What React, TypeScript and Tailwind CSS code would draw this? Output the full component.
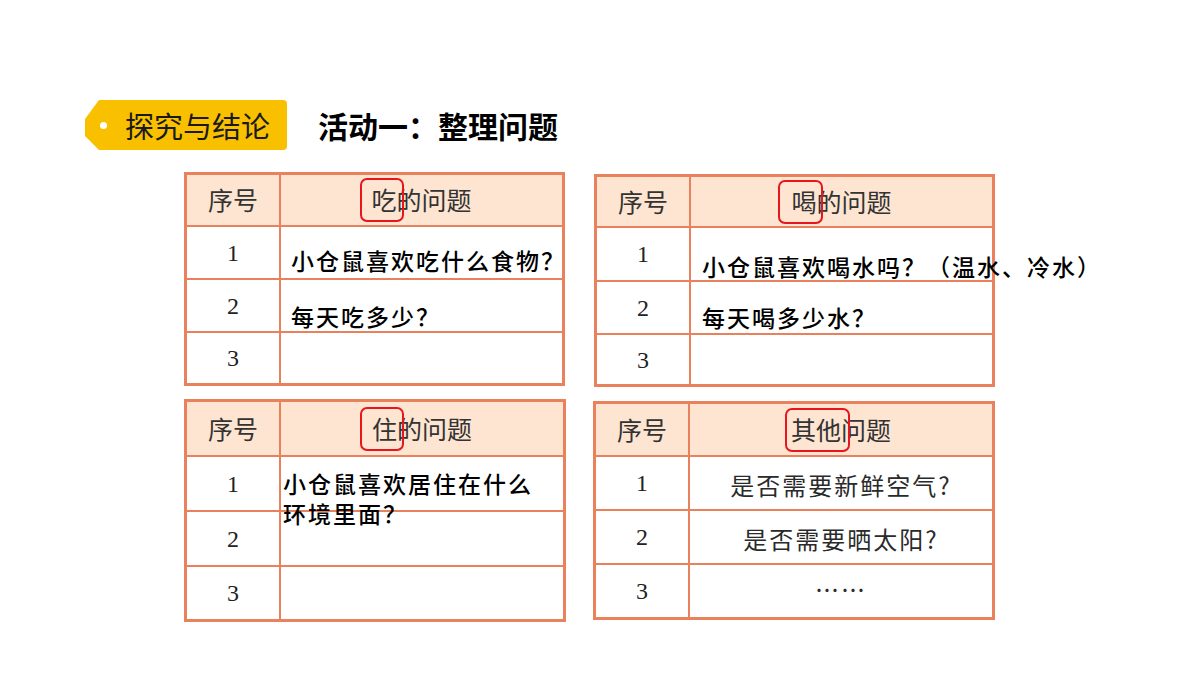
const SANS = 'font-["Noto_Sans_CJK_SC","Noto_Sans",sans-serif]';

type Row = { h: number; text?: React.ReactNode };

const Mark: React.FC<{ chars: string; left: number; width: number }> = ({ chars, left, width }) => (
    <span className="relative inline-block">
        {chars}
        <span
            className="absolute top-1/2 -translate-y-1/2 h-[44px] rounded-[7px] border-2 border-[#e8161c]"
            style={{ left: -left, width }}
        />
    </span>
);

// rows: h is the cell height without the 2px rule above it
const QTable: React.FC<{
    width: number;
    headH: number;
    head: React.ReactNode;
    rows: Row[];
    className?: string;
}> = ({ width, headH, head, rows, className }) => (
    <div className={`border-[3px] border-[#e9825c] bg-white ${className ?? ''}`} style={{ width }}>
        <div className="flex bg-[#fde5d2]" style={{ height: headH }}>
            <div className={`w-[94px] shrink-0 border-r-2 border-[#e9825c] flex items-center justify-center text-[25px] text-[#333] ${SANS}`}>
                序号
            </div>
            <div className={`flex-1 flex items-center justify-center text-[25px] text-[#333] ${SANS}`}>{head}</div>
        </div>
        {rows.map((r, i) => (
            <div key={i} className="flex border-t-2 border-[#e9825c]" style={{ height: r.h + 2 }}>
                <div className='w-[94px] shrink-0 border-r-2 border-[#e9825c] flex items-center justify-center text-[24px] text-[#222] font-["Liberation_Serif",serif]'>
                    {i + 1}
                </div>
                <div className="flex-1 relative">{r.text}</div>
            </div>
        ))}
    </div>
);

const body = `whitespace-nowrap text-[23px] tracking-[2px] text-black font-medium ${SANS}`;
const kai = `whitespace-nowrap text-[24px] tracking-[2px] text-[#2a2a2a] ${SANS}`;

export default function App() {
    return (
        <div className="w-[1200px] h-[675px] bg-white overflow-hidden">
            {/* Title row */}
            <div className="flex items-center pt-[100px] pl-[85px]">
                <div className="relative w-[202px] h-[50px] bg-[#f9c000] rounded-r-[4px] [clip-path:polygon(14px_0,100%_0,100%_100%,14px_100%,0_36px,0_19px)] flex items-center">
                    <span className="absolute left-[15px] top-[22px] w-[7px] h-[7px] rounded-full bg-white" />
                    <span className={`ml-[40px] text-[29px] text-[#1a1a1a] leading-none ${SANS}`}>探究与结论</span>
                </div>
                <div className={`ml-[31px] text-[30px] font-bold text-black leading-none ${SANS}`}>活动一：整理问题</div>
            </div>

            {/* Tables */}
            <div className="flex gap-[28px] mt-[22px] ml-[184px]">
                <div className="flex flex-col gap-[13px]">
                    <QTable
                        width={381}
                        headH={50}
                        head={<><Mark chars="吃" left={11} width={44} />的问题</>}
                        rows={[
                            { h: 51, text: <div className={`${body} pl-[10px] pt-[16px]`}>小仓鼠喜欢吃什么食物？</div> },
                            { h: 51, text: <div className={`${body} pl-[10px] pt-[19px]`}>每天吃多少？</div> },
                            { h: 50 },
                        ]}
                    />
                    <QTable
                        width={382}
                        headH={53}
                        head={<><Mark chars="住" left={12} width={44} />的问题</>}
                        rows={[
                            {
                                h: 53,
                                text: (
                                    <div className={`${body} absolute left-[2px] top-[11px] leading-[30px]`}>
                                        小仓鼠喜欢居住在什么
                                        <br />
                                        环境里面？
                                    </div>
                                ),
                            },
                            { h: 53 },
                            { h: 52 },
                        ]}
                    />
                </div>
                <div className="flex flex-col gap-[14px] mt-[2px]">
                    <QTable
                        width={401}
                        headH={49}
                        head={<><Mark chars="喝" left={13} width={45} />的问题</>}
                        rows={[
                            { h: 52, text: <div className={`${body} pl-[11px] pt-[21px]`}>小仓鼠喜欢喝水吗？（温水、冷水）</div> },
                            { h: 51, text: <div className={`${body} pl-[11px] pt-[18px]`}>每天喝多少水？</div> },
                            { h: 49 },
                        ]}
                    />
                    <QTable
                        width={402}
                        headH={51}
                        className="-ml-px"
                        head={<><Mark chars="其他" left={6} width={65} />问题</>}
                        rows={[
                            { h: 52, text: <div className={`${kai} h-full flex items-center justify-center pt-1`}>是否需要新鲜空气?</div> },
                            { h: 52, text: <div className={`${kai} h-full flex items-center justify-center pt-1`}>是否需要晒太阳?</div> },
                            { h: 52, text: <div className={`${kai} h-full flex items-center justify-center pb-1`}>……</div> },
                        ]}
                    />
                </div>
            </div>
        </div>
    );
}
